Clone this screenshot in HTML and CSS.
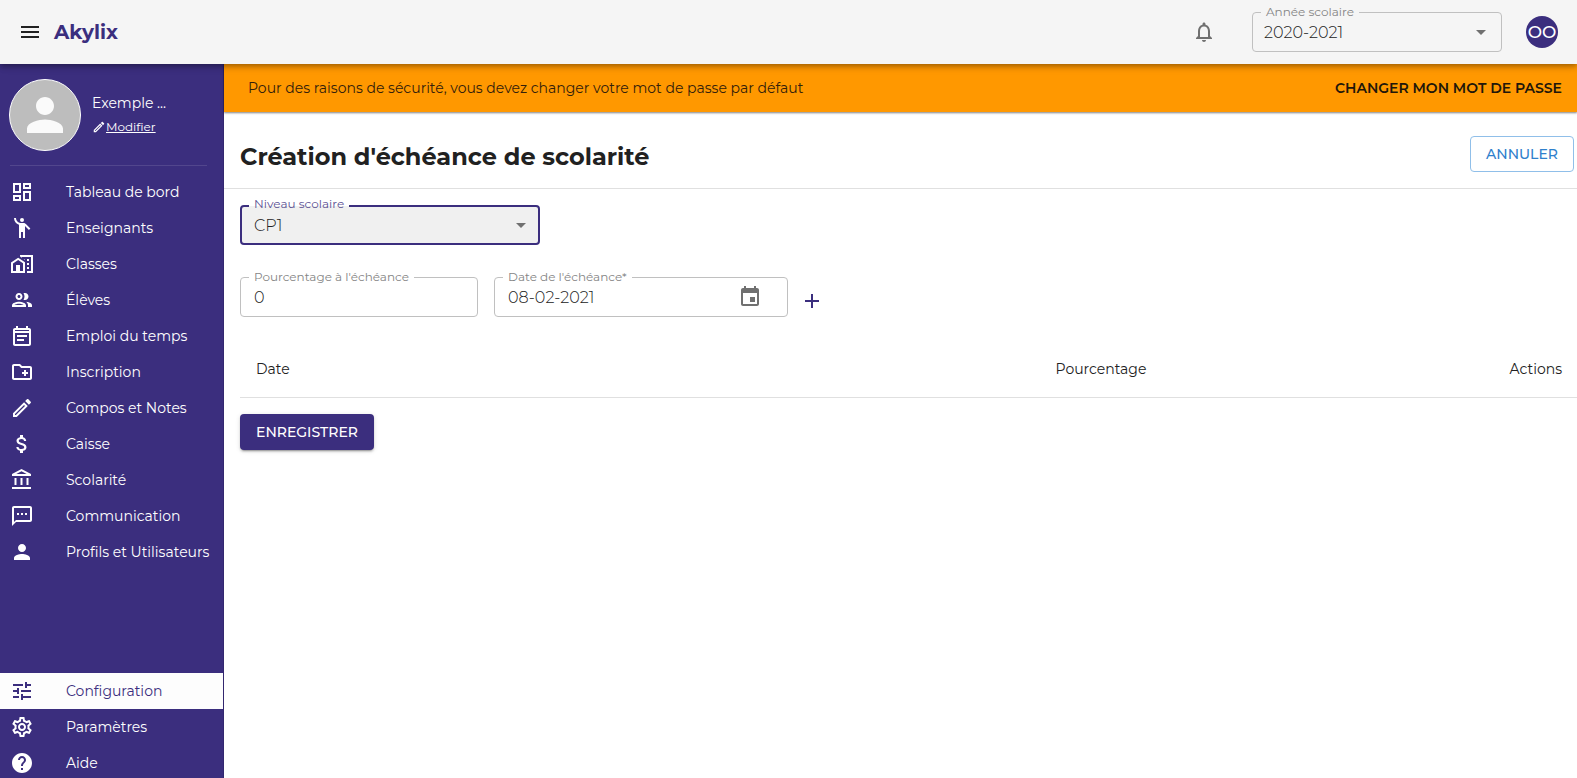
FILE: index.html
```html
<!DOCTYPE html>
<html lang="fr">
<head>
<meta charset="utf-8">
<title>Akylix</title>
<link rel="stylesheet" href="styles.css">
</head>
<body>
<div class="app">
  <header class="topbar">
    <button class="icon-btn menu-btn" type="button" aria-label="Menu"><svg class="icon" viewBox="0 0 24 24"><path d="M3 18h18v-2H3v2zm0-5h18v-2H3v2zm0-7v2h18V6H3z"/></svg></button>
    <span class="brand">Akylix</span>
    <button class="icon-btn bell" type="button" aria-label="Notifications"><svg class="icon" viewBox="0 0 24 24"><path d="M12 22c1.1 0 2-.9 2-2h-4c0 1.1.9 2 2 2zm6-6v-5c0-3.07-1.63-5.64-4.5-6.32V4c0-.83-.67-1.5-1.5-1.5s-1.5.67-1.5 1.5v.68C7.64 5.36 6 7.92 6 11v5l-2 2v1h16v-1l-2-2zm-2 1H8v-6c0-2.48 1.51-4.5 4-4.5s4 2.02 4 4.5v6z"/></svg></button>
    <div class="field field-year">
      <label class="field-label" for="year">Année scolaire</label>
      <select id="year" class="control"><option>2020-2021</option></select>
      <svg class="icon arrow" viewBox="0 0 24 24"><path d="M7 10l5 5 5-5z"/></svg>
    </div>
    <button class="user" type="button">OO</button>
  </header>

  <div class="body">
    <nav class="sidebar">
      <div class="profile">
        <div class="avatar"><svg class="avatar-icon" viewBox="0 0 24 24"><path d="M12 12c2.21 0 4-1.79 4-4s-1.79-4-4-4-4 1.79-4 4 1.79 4 4 4zm0 2c-2.67 0-8 1.34-8 4v2h16v-2c0-2.66-5.33-4-8-4z"/></svg></div>
        <div class="profile-text">
          <span class="profile-name">Exemple ...</span>
          <a class="profile-edit" href="#"><svg class="icon-small" viewBox="0 0 24 24"><path d="M14.06 9.02l.92.92L5.92 19H5v-.92l9.06-9.06M17.66 3c-.25 0-.51.1-.7.29l-1.83 1.83 3.75 3.75 1.83-1.83c.39-.39.39-1.02 0-1.41l-2.34-2.34c-.2-.2-.45-.29-.71-.29zm-3.6 3.19L3 17.25V21h3.75L17.81 9.94l-3.75-3.75z"/></svg><span class="underlined">Modifier</span></a>
        </div>
      </div>
      <hr class="divider">
      <ul class="nav nav-main">
        <li><a class="nav-link" href="#"><svg class="icon" viewBox="0 0 24 24"><path d="M19 5v2h-4V5h4M9 5v6H5V5h4m10 8v6h-4v-6h4M9 17v2H5v-2h4M21 3h-8v6h8V3zM11 3H3v10h8V3zm10 8h-8v10h8V11zm-10 4H3v6h8v-6z"/></svg>Tableau de bord</a></li>
        <li><a class="nav-link" href="#"><svg class="icon" viewBox="0 0 24 24"><circle cx="12" cy="4" r="2"/><path d="M15.89 8.11C15.5 7.72 14.83 7 13.53 7h-2.54C8.24 6.99 6 4.75 6 2H4c0 3.16 2.11 5.84 5 6.71V22h2v-6h2v6h2V10.05L18.95 14l1.41-1.41-4.47-4.48z"/></svg>Enseignants</a></li>
        <li><a class="nav-link" href="#"><svg class="icon" viewBox="0 0 24 24"><path d="M17 15h2v2h-2zM17 11h2v2h-2zM17 7h2v2h-2zM13.74 7l1.26.84V7z"/><path d="M10 3v1.51l2 1.33V5h9v14h-4v2h6V3z"/><path d="M8.17 5.7L15 10.25V21H1V10.48L8.17 5.7zM10 19h3v-7.84L8.17 8.09 3 11.38V19h3v-6h4v6z"/></svg>Classes</a></li>
        <li><a class="nav-link" href="#"><svg class="icon" viewBox="0 0 24 24"><path d="M9 13.75c-2.34 0-7 1.17-7 3.5V19h14v-1.75c0-2.33-4.66-3.5-7-3.5zM4.34 17c.84-.58 2.87-1.25 4.66-1.25s3.82.67 4.66 1.25H4.34zM9 12c1.93 0 3.5-1.57 3.5-3.5S10.93 5 9 5 5.5 6.57 5.5 8.5 7.07 12 9 12zm0-5c.83 0 1.5.67 1.5 1.5S9.83 10 9 10s-1.5-.67-1.5-1.5S8.17 7 9 7zm7.04 6.81c1.16.84 1.96 1.96 1.96 3.44V19h4v-1.75c0-2.02-3.5-3.17-5.96-3.44zM15 12c1.93 0 3.5-1.57 3.5-3.5S16.93 5 15 5c-.54 0-1.04.13-1.5.35.63.89 1 1.98 1 3.15s-.37 2.26-1 3.15c.46.22.96.35 1.5.35z"/></svg>Élèves</a></li>
        <li><a class="nav-link" href="#"><svg class="icon" viewBox="0 0 24 24"><path d="M19 4h-1V2h-2v2H8V2H6v2H5c-1.11 0-2 .9-2 2v14c0 1.1.89 2 2 2h14c1.1 0 2-.9 2-2V6c0-1.1-.9-2-2-2zm0 16H5V9h14v11zm0-13H5V6h14v1zM7 11h10v2H7zM7 15h7v2H7z"/></svg>Emploi du temps</a></li>
        <li><a class="nav-link" href="#"><svg class="icon" viewBox="0 0 24 24"><path d="M20 6h-8l-2-2H4c-1.11 0-1.99.89-1.99 2L2 18c0 1.11.89 2 2 2h16c1.11 0 2-.89 2-2V8c0-1.11-.89-2-2-2zm0 12H4V6h5.17l2 2H20v10zm-8-4h2v2h2v-2h2v-2h-2v-2h-2v2h-2z"/></svg>Inscription</a></li>
        <li><a class="nav-link" href="#"><svg class="icon" viewBox="0 0 24 24"><path d="M14.06 9.02l.92.92L5.92 19H5v-.92l9.06-9.06M17.66 3c-.25 0-.51.1-.7.29l-1.83 1.83 3.75 3.75 1.83-1.83c.39-.39.39-1.02 0-1.41l-2.34-2.34c-.2-.2-.45-.29-.71-.29zm-3.6 3.19L3 17.25V21h3.75L17.81 9.94l-3.75-3.75z"/></svg>Compos et Notes</a></li>
        <li><a class="nav-link" href="#"><svg class="icon" viewBox="0 0 24 24"><path d="M11.8 10.9c-2.27-.59-3-1.2-3-2.15 0-1.09 1.01-1.85 2.7-1.85 1.78 0 2.44.85 2.5 2.1h2.21c-.07-1.72-1.12-3.3-3.21-3.81V3h-3v2.16c-1.94.42-3.5 1.68-3.5 3.61 0 2.31 1.91 3.46 4.7 4.13 2.5.6 3 1.48 3 2.41 0 .69-.49 1.79-2.7 1.79-2.06 0-2.87-.92-2.98-2.1h-2.2c.12 2.19 1.76 3.42 3.68 3.83V21h3v-2.15c1.95-.37 3.5-1.5 3.5-3.55 0-2.84-2.43-3.81-4.7-4.4z"/></svg>Caisse</a></li>
        <li><a class="nav-link" href="#"><svg class="icon" viewBox="0 0 24 24"><path d="M6.5 10h-2v7h2v-7zm6 0h-2v7h2v-7zm8.5 9H2v2h19v-2zm-2.5-9h-2v7h2v-7zm-7-6.74L16.71 6H6.29l5.21-2.74m0-2.26L2 6v2h19V6l-9.5-5z"/></svg>Scolarité</a></li>
        <li><a class="nav-link" href="#"><svg class="icon" viewBox="0 0 24 24"><path d="M20 2H4c-1.1 0-2 .9-2 2v18l4-4h14c1.1 0 2-.9 2-2V4c0-1.1-.9-2-2-2zm0 14H6l-2 2V4h16v12zM7 9h2v2H7zm4 0h2v2h-2zm4 0h2v2h-2z"/></svg>Communication</a></li>
        <li><a class="nav-link" href="#"><svg class="icon" viewBox="0 0 24 24"><path d="M12 12c2.21 0 4-1.79 4-4s-1.79-4-4-4-4 1.79-4 4 1.79 4 4 4zm0 2c-2.67 0-8 1.34-8 4v2h16v-2c0-2.66-5.33-4-8-4z"/></svg>Profils et Utilisateurs</a></li>
      </ul>
      <ul class="nav">
        <li><a class="nav-link active" href="#" aria-current="page"><svg class="icon" viewBox="0 0 24 24"><path d="M3 17v2h6v-2H3zM3 5v2h10V5H3zm10 16v-2h8v-2h-8v-2h-2v6h2zM7 9v2H3v2h4v2h2V9H7zm14 4v-2H11v2h10zm-6-4h2V7h4V5h-4V3h-2v6z"/></svg>Configuration</a></li>
        <li><a class="nav-link" href="#"><svg class="icon" viewBox="0 0 24 24"><path d="M19.43 12.98c.04-.32.07-.64.07-.98 0-.34-.03-.66-.07-.98l2.11-1.65c.19-.15.24-.42.12-.64l-2-3.46c-.09-.16-.26-.25-.44-.25-.06 0-.12.01-.17.03l-2.49 1c-.52-.4-1.08-.73-1.69-.98l-.38-2.65C14.46 2.18 14.25 2 14 2h-4c-.25 0-.46.18-.49.42l-.38 2.65c-.61.25-1.17.59-1.69.98l-2.49-1c-.06-.02-.12-.03-.18-.03-.17 0-.34.09-.43.25l-2 3.46c-.13.22-.07.49.12.64l2.11 1.65c-.04.32-.07.65-.07.98 0 .33.03.66.07.98l-2.11 1.65c-.19.15-.24.42-.12.64l2 3.46c.09.16.26.25.44.25.06 0 .12-.01.17-.03l2.49-1c.52.4 1.08.73 1.69.98l.38 2.65c.03.24.24.42.49.42h4c.25 0 .46-.18.49-.42l.38-2.65c.61-.25 1.17-.59 1.69-.98l2.49 1c.06.02.12.03.18.03.17 0 .34-.09.43-.25l2-3.46c.12-.22.07-.49-.12-.64l-2.11-1.65zm-1.98-1.71c.04.31.05.52.05.73 0 .21-.02.43-.05.73l-.14 1.13.89.7 1.08.84-.7 1.21-1.27-.51-1.04-.42-.9.68c-.43.32-.84.56-1.25.73l-1.06.43-.16 1.13-.2 1.35h-1.4l-.19-1.35-.16-1.13-1.06-.43c-.43-.18-.83-.41-1.23-.71l-.91-.7-1.06.43-1.27.51-.7-1.21 1.08-.84.89-.7-.14-1.13c-.03-.31-.05-.54-.05-.74s.02-.43.05-.73l.14-1.13-.89-.7-1.08-.84.7-1.21 1.27.51 1.04.42.9-.68c.43-.32.84-.56 1.25-.73l1.06-.43.16-1.13.2-1.35h1.39l.19 1.35.16 1.13 1.06.43c.43.18.83.41 1.23.71l.91.7 1.06-.43 1.27-.51.7 1.21-1.07.85-.89.7.14 1.13zM12 8c-2.21 0-4 1.79-4 4s1.79 4 4 4 4-1.79 4-4-1.79-4-4-4zm0 6c-1.1 0-2-.9-2-2s.9-2 2-2 2 .9 2 2-.9 2-2 2z"/></svg>Paramètres</a></li>
        <li><a class="nav-link" href="#"><svg class="icon" viewBox="0 0 24 24"><path d="M12 2C6.48 2 2 6.48 2 12s4.48 10 10 10 10-4.48 10-10S17.52 2 12 2zm1 17h-2v-2h2v2zm2.07-7.75l-.9.92C13.45 12.9 13 13.5 13 15h-2v-.5c0-1.1.45-2.1 1.17-2.83l1.24-1.26c.37-.36.59-.86.59-1.41 0-1.1-.9-2-2-2s-2 .9-2 2H8c0-2.21 1.79-4 4-4s4 1.79 4 4c0 .88-.36 1.68-.93 2.25z"/></svg>Aide</a></li>
      </ul>
    </nav>

    <main class="main">
      <div class="banner">
        <span class="banner-text">Pour des raisons de sécurité, vous devez changer votre mot de passe par défaut</span>
        <button class="banner-btn" type="button">CHANGER MON MOT DE PASSE</button>
      </div>
      <div class="page-head">
        <h1 class="title">Création d'échéance de scolarité</h1>
        <button class="btn btn-outline" type="button">ANNULER</button>
      </div>
      <form class="form">
        <div class="field field-level focused">
          <label class="field-label" for="level">Niveau scolaire</label>
          <select id="level" class="control"><option>CP1</option></select>
          <svg class="icon arrow" viewBox="0 0 24 24"><path d="M7 10l5 5 5-5z"/></svg>
        </div>
        <div class="row">
          <div class="field field-percent">
            <label class="field-label" for="percent">Pourcentage à l'échéance</label>
            <input id="percent" class="control" type="text" value="0">
          </div>
          <div class="field field-date">
            <label class="field-label" for="date">Date de l'échéance*</label>
            <input id="date" class="control" type="text" value="08-02-2021">
            <button class="icon-btn calendar" type="button" aria-label="Choisir une date"><svg class="icon" viewBox="0 0 24 24"><path d="M17 12h-5v5h5v-5zM16 1v2H8V1H6v2H5c-1.11 0-1.99.9-1.99 2L3 19c0 1.1.89 2 2 2h14c1.1 0 2-.9 2-2V5c0-1.1-.9-2-2-2h-1V1h-2zm3 18H5V8h14v11z"/></svg></button>
          </div>
          <button class="icon-btn add" type="button" aria-label="Ajouter"><svg class="icon" viewBox="0 0 24 24"><path d="M19 13h-6v6h-2v-6H5v-2h6V5h2v6h6v2z"/></svg></button>
        </div>
        <table class="table">
          <thead>
            <tr><th class="col-date" scope="col">Date</th><th scope="col">Pourcentage</th><th class="col-actions" scope="col">Actions</th></tr>
          </thead>
        </table>
        <button class="btn btn-primary" type="submit">ENREGISTRER</button>
      </form>
    </main>
  </div>
</div>
</body>
</html>
```
FILE: styles.css
```css
:root {
  --primary: #3b2e7e;
  --text: #212121;
  --line: #e0e0e0;
}

* {
  box-sizing: border-box;
}

body {
  margin: 0;
  font-family: Montserrat, Inter, sans-serif;
  font-size: 14px;
  color: var(--text);
  background: #fff;
}

button,
input,
select {
  font-family: inherit;
  color: inherit;
}

button {
  padding: 0;
  border: 0;
  background: none;
  cursor: pointer;
}

.icon {
  flex: none;
  width: 24px;
  height: 24px;
  fill: currentColor;
}

.icon-btn {
  display: flex;
}

.app {
  display: flex;
  flex-direction: column;
  height: 100vh;
  overflow: hidden;
}

/* Top bar */
.topbar {
  z-index: 2;
  flex: none;
  display: flex;
  align-items: center;
  height: 64px;
  padding: 0 19px 0 18px;
  background: #f5f5f5;
  box-shadow: 0 2px 4px -1px rgba(0, 0, 0, .2), 0 4px 5px rgba(0, 0, 0, .14), 0 1px 10px rgba(0, 0, 0, .12);
}

.brand {
  margin-left: 12px;
  font-size: 20px;
  font-weight: 700;
  color: var(--primary);
}

.bell {
  margin-left: auto;
  margin-right: 36px;
  color: #707070;
}

.user {
  width: 32px;
  height: 32px;
  margin-left: 24px;
  border-radius: 50%;
  background: var(--primary);
  color: #fff;
  font-size: 17px;
  font-weight: 500;
}

/* Outlined fields */
.field {
  --surface: #fff;
  position: relative;
  display: flex;
  align-items: center;
  height: 40px;
  border: 1px solid #c0c0c0;
  border-radius: 4px;
}

.field-label {
  position: absolute;
  top: -9px;
  left: 8px;
  padding: 0 5px;
  background: var(--surface);
  font-size: 12px;
  line-height: 16px;
  color: #858585;
  white-space: nowrap;
}

.control {
  appearance: none;
  width: 100%;
  height: 38px;
  padding: 0 13px;
  border: 0;
  outline: 0;
  background: none;
  font-size: 16px;
  font-weight: 300;
}

.arrow {
  position: absolute;
  right: 8px;
  color: #707070;
  pointer-events: none;
}

.field-year {
  --surface: #f5f5f5;
  width: 250px;
}

.field-year .control {
  padding: 0 11px;
}

.field-level {
  width: 300px;
}

.focused {
  border: 2px solid var(--primary);
  background: #f0f0f0;
}

.focused .field-label {
  top: -11px;
  left: 7px;
  background: linear-gradient(#fff 60%, #f0f0f0 60%);
  color: #5b5192;
}

.focused .control {
  height: 36px;
  padding: 0 12px;
}

.focused .arrow {
  right: 5px;
}

.field-percent {
  width: 238px;
}

.field-date {
  width: 294px;
}

.calendar {
  margin-right: 25px;
  color: #707070;
}

.add {
  align-self: flex-end;
  padding-bottom: 4px;
  margin-left: -4px;
  color: var(--primary);
}

/* Sidebar */
.body {
  flex: 1;
  display: flex;
  min-height: 0;
}

.sidebar {
  flex: none;
  display: flex;
  flex-direction: column;
  width: 224px;
  border-right: 1px solid #33276f;
  background: var(--primary);
  color: #fff;
  overflow: hidden;
}

.profile {
  flex: none;
  display: flex;
  align-items: center;
  gap: 11px;
  padding: 15px 9px 13px;
}

.avatar {
  display: flex;
  align-items: center;
  justify-content: center;
  width: 72px;
  height: 72px;
  border: 1px solid #fff;
  border-radius: 50%;
  background: #bdbdbd;
}

.avatar-icon {
  width: 54px;
  height: 54px;
  fill: #fafafa;
}

.profile-text {
  display: flex;
  flex-direction: column;
  line-height: 24px;
}

.profile-edit {
  display: flex;
  align-items: center;
  font-size: 12px;
  color: inherit;
  text-decoration: none;
}

.underlined {
  text-decoration: underline;
}

.icon-small {
  width: 14px;
  height: 14px;
  fill: currentColor;
}

.divider {
  flex: none;
  width: 197px;
  height: 1px;
  margin: 1px 0 8px 10px;
  border: 0;
  background: #52468d;
}

.nav {
  flex: none;
  margin: 0;
  padding: 0;
  list-style: none;
}

.nav-main {
  flex: 1 0 auto;
  padding-bottom: 103px;
}

.nav-link {
  display: flex;
  align-items: center;
  gap: 32px;
  height: 36px;
  padding-left: 10px;
  color: #fff;
  text-decoration: none;
  white-space: nowrap;
}

.nav-link.active {
  background: #fdfdfd;
  color: var(--primary);
}

/* Content */
.main {
  flex: 1;
  min-width: 0;
}

.banner {
  display: flex;
  align-items: center;
  justify-content: space-between;
  height: 48px;
  padding: 0 15px 0 24px;
  background: #ff9800;
  box-shadow: 0 1px 2px rgba(0, 0, 0, .5);
  color: #33200b;
}

.banner-btn {
  font-size: 14px;
  font-weight: 600;
  color: #21160a;
}

.page-head {
  display: flex;
  align-items: flex-start;
  justify-content: space-between;
  padding: 24px 3px 16px 16px;
  border-bottom: 1px solid var(--line);
}

.title {
  margin: 6px 0 0;
  font-size: 24px;
  line-height: 30px;
  font-weight: 700;
}

.btn {
  height: 36px;
  padding: 0 16px;
  border-radius: 4px;
  font-size: 14px;
  font-weight: 500;
}

.btn-outline {
  padding: 0 15px;
  border: 1px solid #90bfe9;
  color: #2f80cc;
}

.btn-primary {
  background: var(--primary);
  box-shadow: 0 3px 1px -2px rgba(0, 0, 0, .2), 0 2px 2px rgba(0, 0, 0, .14), 0 1px 5px rgba(0, 0, 0, .12);
  color: #fff;
}

.form {
  padding: 16px 0 0 16px;
}

.row {
  display: flex;
  gap: 16px;
  margin-top: 32px;
}

.table {
  width: 100%;
  margin: 24px 0 16px;
  border-collapse: collapse;
}

.table th {
  height: 56px;
  padding: 0 15px 0 16px;
  border-bottom: 1px solid var(--line);
  font-weight: 400;
  text-align: left;
}

.table .col-date {
  width: 59.8%;
}

.table .col-actions {
  text-align: right;
}
```
